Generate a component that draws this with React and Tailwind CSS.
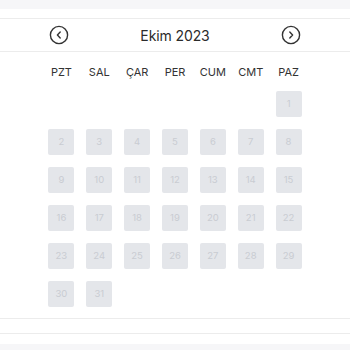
const days = ["PZT", "SAL", "ÇAR", "PER", "CUM", "CMT", "PAZ"];

const ChevronCircle = ({ dir }) => (
  <svg width="20" height="20" viewBox="0 0 20 20" fill="none" stroke="#333" strokeWidth="1.4" strokeLinecap="round" strokeLinejoin="round">
    <circle cx="10" cy="10" r="8.6" />
    {dir === "left" ? <path d="M11.2 7 L8.4 10 L11.2 13" /> : <path d="M8.8 7 L11.6 10 L8.8 13" />}
  </svg>
);

const App = () => {
  // Ekim 2023 starts on Sunday -> 6 empty slots
  const cells = [];
  for (let i = 0; i < 6; i++) cells.push(null);
  for (let d = 1; d <= 31; d++) cells.push(d);

  return (
    <div className="w-[350px] h-[350px] bg-[#f6f6f8] font-['Inter','Liberation_Sans',sans-serif] overflow-hidden">
      <div className="h-[9px]" />
      <div className="bg-white">
        <div className="h-[10px] border-b border-[#ececec]" />
        <div className="h-[33px] border-b border-[#ececec]">
          <div className="w-[253px] mx-auto h-full flex items-center justify-between">
            <button className="flex items-center justify-center">
              <ChevronCircle dir="left" />
            </button>
            <span className="text-[14px] text-[#2b2b2b] tracking-[-0.1px]">Ekim 2023</span>
            <button className="flex items-center justify-center">
              <ChevronCircle dir="right" />
            </button>
          </div>
        </div>
        <div className="w-[265px] mx-auto pt-[13px] pb-[11px]">
          <div className="grid grid-cols-7 h-[14px] items-center">
            {days.map((d) => (
              <div key={d} className="text-center text-[11px] text-[#333] leading-none">
                {d}
              </div>
            ))}
          </div>
          <div className="grid grid-cols-7 gap-y-[12px] mt-[12px]">
            {cells.map((d, i) => (
              <div key={i} className="flex justify-center">
                {d ? (
                  <div className="w-[26px] h-[26px] rounded-[2px] bg-[#e4e6ea] flex items-center justify-center text-[9.5px] text-[#c9ccd2]">
                    {d}
                  </div>
                ) : (
                  <div className="w-[26px] h-[26px]" />
                )}
              </div>
            ))}
          </div>
        </div>
        <div className="h-[15px] border-t border-[#ececec]" />
        <div className="h-[11px] border-t border-[#ececec]" />
      </div>
    </div>
  );
};

export default App;
